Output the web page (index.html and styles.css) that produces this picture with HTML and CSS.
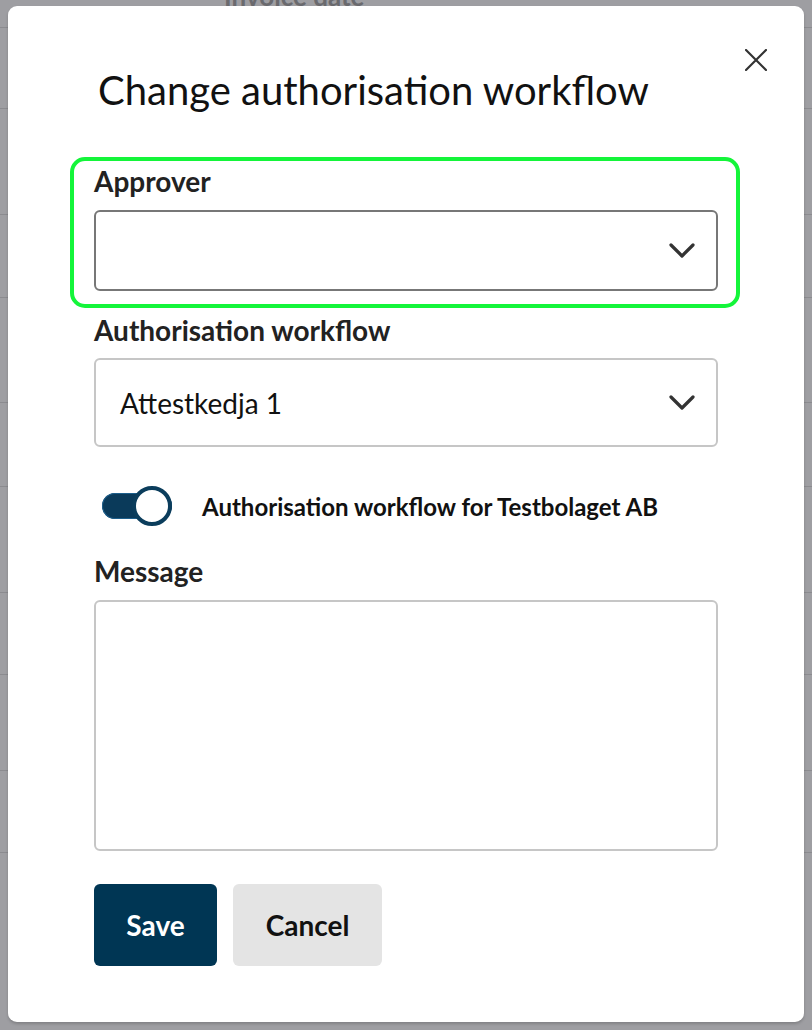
FILE: index.html
```html
<!DOCTYPE html>
<html lang="en">
<head>
<meta charset="utf-8">
<title>Change authorisation workflow</title>
<link rel="stylesheet" href="styles.css">
</head>
<body>
<div class="page">
  <div class="page-head"><span class="page-head-text">Invoice date</span></div>
  <div class="row h81"></div>
  <div class="row h106"></div>
  <div class="row h83"></div>
  <div class="row h105"></div>
  <div class="row h84"></div>
  <div class="row h106"></div>
  <div class="row h82"></div>
  <div class="row h96"></div>
  <div class="row h82"></div>
</div>

<div class="modal" role="dialog" aria-labelledby="dlg-title">
  <button class="close" aria-label="Close">
    <svg width="22" height="22" viewBox="0 0 22 22"><path d="M1 1 L21 21 M21 1 L1 21" stroke="#333" stroke-width="2.2" stroke-linecap="round" fill="none"/></svg>
  </button>

  <h1 class="title" id="dlg-title">Change authorisation workflow</h1>

  <div class="field field-focus">
    <div class="label">Approver</div>
    <div class="select select-approver">
      <span class="select-value"></span>
      <svg class="chev" width="26" height="16" viewBox="0 0 26 16"><path d="M2 2 L13 13 L24 2" stroke="#333" stroke-width="3.2" stroke-linecap="round" stroke-linejoin="round" fill="none"/></svg>
    </div>
  </div>

  <div class="field field-workflow">
    <div class="label">Authorisation workflow</div>
    <div class="select select-workflow">
      <span class="select-value">Attestkedja 1</span>
      <svg class="chev" width="26" height="16" viewBox="0 0 26 16"><path d="M2 2 L13 13 L24 2" stroke="#333" stroke-width="3.2" stroke-linecap="round" stroke-linejoin="round" fill="none"/></svg>
    </div>
  </div>

  <div class="toggle-row">
    <span class="switch"><span class="thumb"></span></span>
    <span class="toggle-label">Authorisation workflow for Testbolaget AB</span>
  </div>

  <div class="field field-message">
    <div class="label">Message</div>
    <div class="textarea"></div>
  </div>

  <div class="actions">
    <button class="btn btn-save">Save</button>
    <button class="btn btn-cancel">Cancel</button>
  </div>
</div>
</body>
</html>
```

FILE: styles.css
```css
* { box-sizing: border-box; }

html, body {
  margin: 0;
  padding: 0;
}

body {
  width: 812px;
  height: 1030px;
  overflow: hidden;
  background: #9e9ea2;
  font-family: Lato, "Noto Sans", sans-serif;
  position: relative;
}

/* background page (dimmed) */
.page {
  display: flex;
  flex-direction: column;
}

.page-head {
  height: 28px;
  border-bottom: 1px solid #8b8b8f;
}

.page-head-text {
  display: block;
  margin-top: -19px;
  margin-left: 224px;
  font-size: 26px;
  font-weight: 700;
  color: #6a6a6e;
  line-height: 30px;
}

.row { border-bottom: 1px solid #8b8b8f; }
.h81 { height: 81px; }
.h82 { height: 82px; }
.h83 { height: 83px; }
.h84 { height: 84px; }
.h96 { height: 96px; }
.h105 { height: 105px; }
.h106 { height: 106px; }

/* modal */
.modal {
  position: absolute;
  left: 8px;
  top: 6px;
  width: 796px;
  height: 1016px;
  background: #fff;
  border-radius: 9px;
  box-shadow: 0 2px 3px rgba(0,0,0,0.18);
  padding: 61px 86px 0 86px;
  display: flex;
  flex-direction: column;
}

.close {
  position: absolute;
  top: 43px;
  right: 37px;
  width: 22px;
  height: 22px;
  padding: 0;
  border: 0;
  background: none;
  display: flex;
}

.title {
  margin: 0;
  padding-left: 4px;
  font-size: 40px;
  line-height: 46px;
  font-weight: 400;
  color: #111;
}

.field {
  display: flex;
  flex-direction: column;
}

.label {
  font-size: 28px;
  line-height: 31px;
  font-weight: 700;
  color: #222;
  margin-bottom: 13px;
}

.field-focus {
  margin: 44px -22px 0 -24px;
  padding: 5px 18px 13px 20px;
  border: 4px solid #14f53a;
  border-radius: 15px;
}

.field-workflow { margin-top: 7px; }
.field-workflow .label { margin-bottom: 12px; }

.select {
  display: flex;
  align-items: center;
  justify-content: space-between;
  border-radius: 6px;
  padding: 0 21px 0 24px;
  background: #fff;
}

.select-approver {
  height: 81px;
  border: 2px solid #777;
}

.select-workflow {
  height: 89px;
  border: 2px solid #c6c6c6;
}

.select-value {
  font-size: 28px;
  color: #111;
}

.chev { display: block; }

.toggle-row {
  margin-top: 39px;
  padding-left: 8px;
  height: 40px;
  display: flex;
  align-items: center;
  gap: 30px;
}

.switch {
  width: 70px;
  height: 26px;
  border-radius: 13px;
  background: #0a3a5a;
  box-shadow: inset 0 0 0 1px #1d5f8c;
  display: flex;
  align-items: center;
  justify-content: flex-end;
}

.thumb {
  width: 40px;
  height: 40px;
  border-radius: 50%;
  background: #fff;
  border: 4px solid #0b3d5c;
}

.toggle-label {
  font-size: 24px;
  font-weight: 700;
  color: #111;
}

.field-message { margin-top: 30px; }

.textarea {
  height: 251px;
  border: 2px solid #c6c6c6;
  border-radius: 6px;
}

.actions {
  margin-top: 33px;
  display: flex;
  gap: 16px;
}

.btn {
  height: 82px;
  border: 0;
  border-radius: 6px;
  font-family: Lato, "Noto Sans", sans-serif;
  font-size: 28px;
  font-weight: 700;
  padding: 0;
}

.btn-save {
  width: 123px;
  background: #003654;
  color: #fff;
}

.btn-cancel {
  width: 149px;
  background: #e4e4e4;
  color: #111;
}
```
